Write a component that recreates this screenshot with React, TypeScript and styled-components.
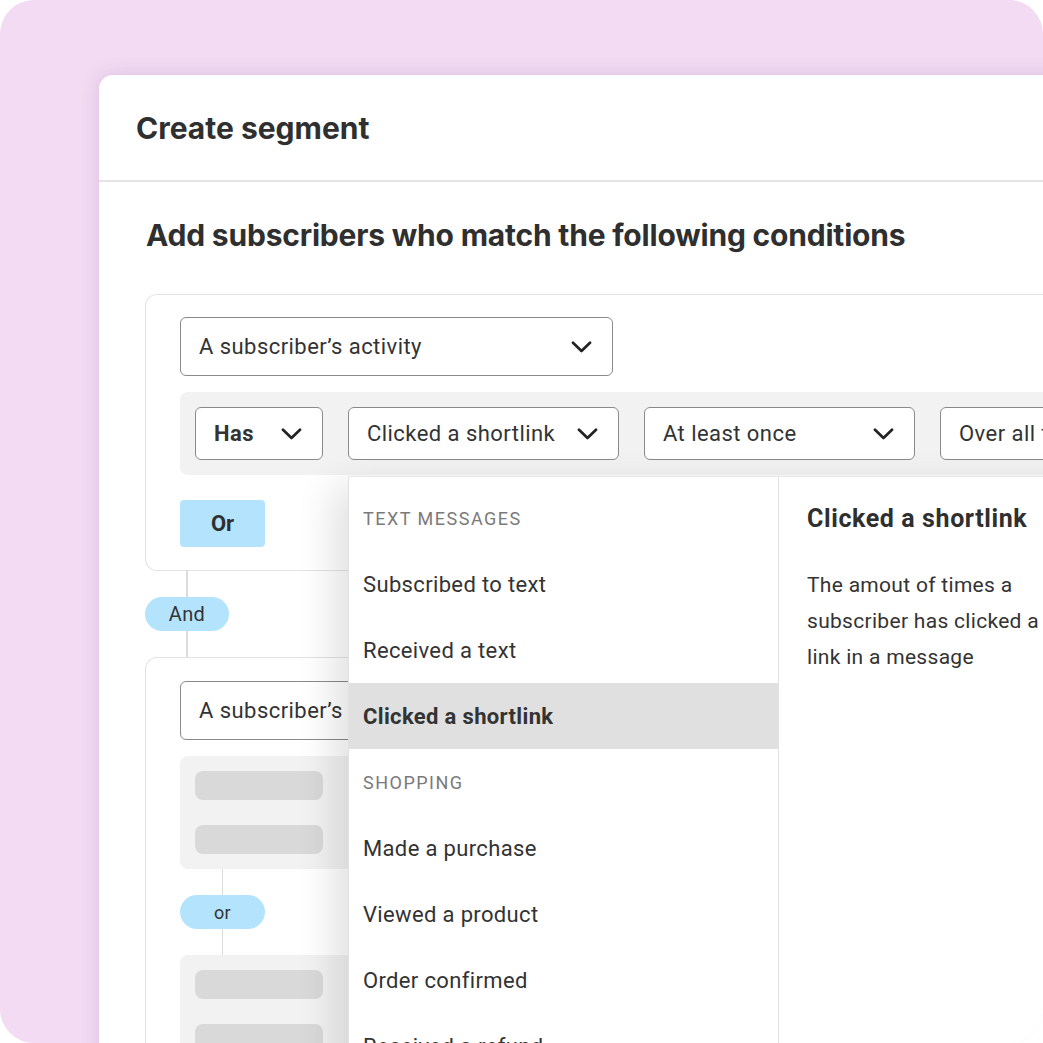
import React from 'react';
import styled, { createGlobalStyle } from 'styled-components';

const GlobalStyle = createGlobalStyle`
  html, body {
    margin: 0;
    padding: 0;
    background: #ffffff;
  }
  body {
    font-family: Roboto, 'Liberation Sans', sans-serif;
    color: #333333;
  }
  * {
    box-sizing: border-box;
  }
`;

const Chevron = () => (
  <svg width="21" height="12" viewBox="0 0 21 12" fill="none">
    <path d="M2 1.8L10.5 10L19 1.8" stroke="#222" strokeWidth="2.7" strokeLinecap="round" strokeLinejoin="round" />
  </svg>
);

const shoppingItems = ['Made a purchase', 'Viewed a product', 'Order confirmed', 'Received a refund'];

const App = () => {
  return (
    <>
      <GlobalStyle />
      <Frame>
        <Panel>
          <Header>
            <Title>Create segment</Title>
          </Header>
          <Body>
            <Heading>Add subscribers who match the following conditions</Heading>

            <ConditionCard>
              <Select $width={433} $height={59}>
                <SelectText>A subscriber’s activity</SelectText>
                <Chevron />
              </Select>
              <FilterRow>
                <Select $width={128}>
                  <SelectText $bold>Has</SelectText>
                  <Chevron />
                </Select>
                <MenuAnchor>
                  <Select $width={271}>
                    <SelectText>Clicked a shortlink</SelectText>
                    <Chevron />
                  </Select>
                  <Dropdown>
                    <OptionList>
                      <GroupLabel>Text messages</GroupLabel>
                      <Option>Subscribed to text</Option>
                      <Option>Received a text</Option>
                      <Option $selected>Clicked a shortlink</Option>
                      <GroupLabel>Shopping</GroupLabel>
                      {shoppingItems.map((item) => (
                        <Option key={item}>{item}</Option>
                      ))}
                    </OptionList>
                    <Preview>
                      <PreviewTitle>Clicked a shortlink</PreviewTitle>
                      <PreviewText>The amout of times a subscriber has clicked a link in a message</PreviewText>
                    </Preview>
                  </Dropdown>
                </MenuAnchor>
                <Select $width={271}>
                  <SelectText>At least once</SelectText>
                  <Chevron />
                </Select>
                <Select $width={200}>
                  <SelectText>Over all time</SelectText>
                  <Chevron />
                </Select>
              </FilterRow>
              <OrButton>Or</OrButton>
            </ConditionCard>

            <Connector $width={84}>
              <ConnectorLine />
              <Pill>And</Pill>
              <ConnectorLine />
            </Connector>

            <ConditionCard $second>
              <Select $width={433} $height={59}>
                <SelectText>A subscriber’s activity</SelectText>
                <Chevron />
              </Select>
              <SkeletonGroup>
                <SkeletonBar />
                <SkeletonBar />
              </SkeletonGroup>
              <Connector $width={85}>
                <ConnectorLine />
                <Pill $small>or</Pill>
                <ConnectorLine />
              </Connector>
              <SkeletonGroup $flush>
                <SkeletonBar />
                <SkeletonBar />
              </SkeletonGroup>
            </ConditionCard>
          </Body>
        </Panel>
      </Frame>
    </>
  );
};

export default App;

const Frame = styled.div`
  width: 1043px;
  height: 1043px;
  overflow: hidden;
  background: #f2dbf3;
  border-radius: 34px;
  padding: 75px 0 0 99px;
`;

const Panel = styled.div`
  width: 1000px;
  min-height: 1100px;
  background: #ffffff;
  border-top-left-radius: 14px;
  box-shadow: 0 0 18px rgba(150, 90, 150, 0.22);
`;

const Header = styled.div`
  height: 107px;
  display: flex;
  align-items: center;
  padding-left: 37px;
  border-bottom: 2px solid #e4e4e4;
`;

const Title = styled.h1`
  margin: 0;
  font-family: Inter, 'Liberation Sans', sans-serif;
  font-size: 30px;
  font-weight: 700;
  letter-spacing: 0;
  color: #2f2f2f;
`;

const Body = styled.div`
  padding: 35px 0 0 46px;
`;

const Heading = styled.h2`
  margin: 0 0 41px 1px;
  font-family: Inter, 'Liberation Sans', sans-serif;
  font-size: 30px;
  line-height: 36px;
  font-weight: 700;
  letter-spacing: -0.2px;
  color: #2f2f2f;
`;

const ConditionCard = styled.div<{ $second?: boolean }>`
  width: 940px;
  border: 1.5px solid #e3e3e3;
  border-right: none;
  border-radius: 12px 0 0 12px;
  padding: ${({ $second }) => ($second ? '23px 0 40px 34px' : '22px 0 23px 34px')};
  display: flex;
  flex-direction: column;
  align-items: flex-start;
`;

const Select = styled.div<{ $width: number; $height?: number }>`
  flex-shrink: 0;
  width: ${({ $width }) => $width}px;
  height: ${({ $height }) => $height || 53}px;
  background: #ffffff;
  border: 1px solid #8a8a8a;
  border-radius: 6px;
  display: flex;
  align-items: center;
  justify-content: space-between;
  padding: 0 20px 0 18px;
`;

const SelectText = styled.span<{ $bold?: boolean }>`
  font-size: 22px;
  letter-spacing: 0.45px;
  font-weight: ${({ $bold }) => ($bold ? 700 : 400)};
  color: #333333;
  white-space: nowrap;
  overflow: hidden;
`;

const FilterRow = styled.div`
  margin-top: 16px;
  align-self: stretch;
  height: 83px;
  background: #f2f2f2;
  border-radius: 8px 0 0 8px;
  padding: 0 0 0 15px;
  display: flex;
  align-items: center;
  gap: 25px;
`;

const MenuAnchor = styled.div`
  position: relative;
`;

const Dropdown = styled.div`
  position: absolute;
  top: calc(100% + 16px);
  left: 0;
  z-index: 5;
  display: flex;
  height: 620px;
  background: #ffffff;
  border-top: 1px solid #e6e6e6;
  box-shadow: -14px 10px 36px rgba(0, 0, 0, 0.12);
`;

const OptionList = styled.div`
  width: 431px;
  padding-top: 8px;
  border-left: 1px solid #e2e2e2;
  border-right: 1px solid #e2e2e2;
  display: flex;
  flex-direction: column;
`;

const GroupLabel = styled.div`
  height: 66px;
  display: flex;
  align-items: center;
  padding-left: 14px;
  font-size: 18px;
  letter-spacing: 1.5px;
  text-transform: uppercase;
  color: #7a7a7a;
`;

const Option = styled.div<{ $selected?: boolean }>`
  height: 66px;
  display: flex;
  align-items: center;
  padding-left: 14px;
  font-size: 22px;
  letter-spacing: 0.35px;
  font-weight: ${({ $selected }) => ($selected ? 700 : 400)};
  background: ${({ $selected }) => ($selected ? '#e0e0e0' : 'transparent')};
  color: #333333;
`;

const Preview = styled.div`
  width: 320px;
  padding: 8px 0 0 28px;
`;

const PreviewTitle = styled.div`
  height: 66px;
  display: flex;
  align-items: center;
  font-size: 25px;
  letter-spacing: 0.6px;
  font-weight: 700;
  color: #2f2f2f;
`;

const PreviewText = styled.p`
  margin: 16px 0 0;
  width: 262px;
  font-size: 21px;
  line-height: 36px;
  letter-spacing: 0.3px;
  color: #333333;
`;

const OrButton = styled.button`
  margin-top: 25px;
  width: 85px;
  height: 47px;
  border: none;
  border-radius: 4px;
  background: #b4e3fd;
  font-family: Roboto, 'Liberation Sans', sans-serif;
  font-size: 22px;
  font-weight: 700;
  color: #2f2f2f;
`;

const Connector = styled.div<{ $width: number }>`
  width: ${({ $width }) => $width}px;
  height: 86px;
  display: flex;
  flex-direction: column;
  align-items: center;
`;

const ConnectorLine = styled.div`
  flex: 1;
  width: 1.5px;
  background: #dcdcdc;
`;

const Pill = styled.div<{ $small?: boolean }>`
  width: 100%;
  height: 34px;
  border-radius: 17px;
  background: #b4e3fd;
  display: flex;
  align-items: center;
  justify-content: center;
  font-size: ${({ $small }) => ($small ? 18 : 20)}px;
  letter-spacing: 0.3px;
  color: #333333;
`;

const SkeletonGroup = styled.div<{ $flush?: boolean }>`
  margin-top: ${({ $flush }) => ($flush ? 0 : 16)}px;
  align-self: stretch;
  background: #f2f2f2;
  border-radius: 8px 0 0 8px;
  padding: 15px;
  display: flex;
  flex-direction: column;
  gap: 25px;
`;

const SkeletonBar = styled.div`
  width: 128px;
  height: 29px;
  border-radius: 8px;
  background: #d9d9d9;
`;
